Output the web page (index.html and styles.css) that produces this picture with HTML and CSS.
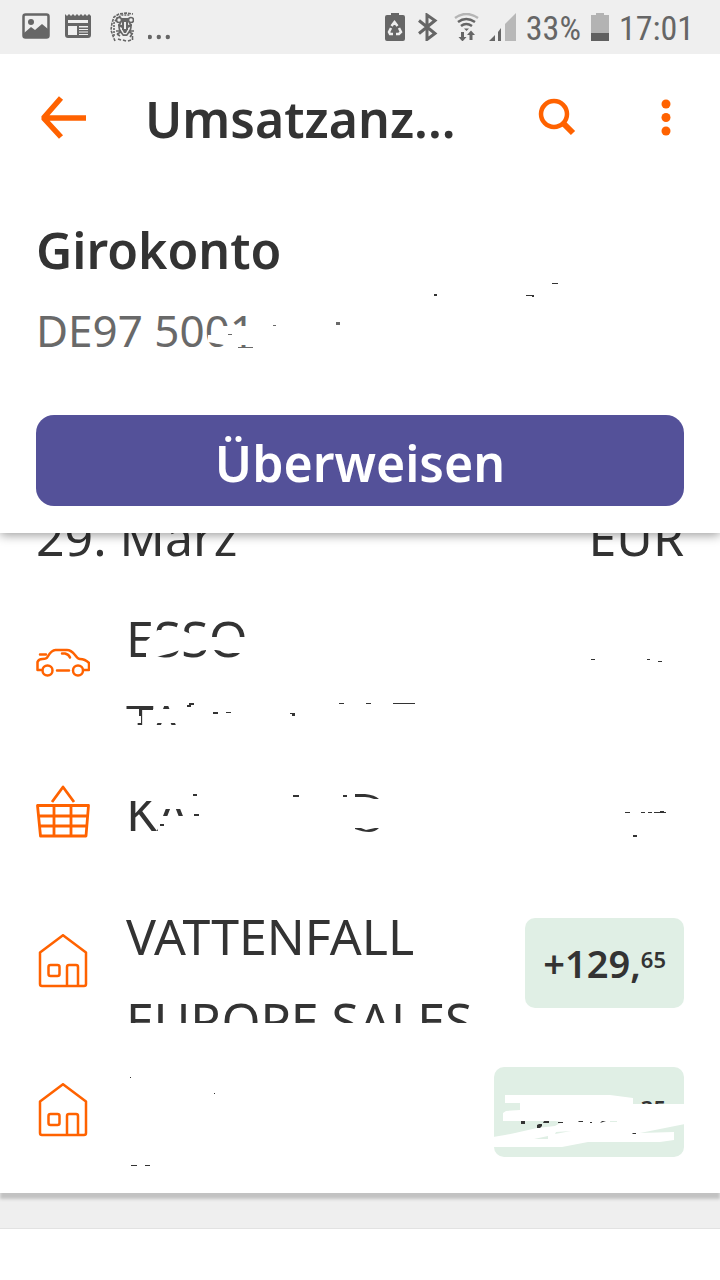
FILE: index.html
```
<!DOCTYPE html>
<html lang="de">

<head>
    <meta charset="UTF-8">
    <meta name="viewport" content="width=device-width, initial-scale=1.0">
    <title>Umsatzanzeige</title>
    <link rel="stylesheet" href="styles.css">
</head>

<body>
    <div class="status-bar">
        <div class="status-left">
            <svg width="28" height="28" viewBox="0 0 28 28">
                <rect x="1.500" y="2.500" width="25" height="23" rx="2" fill="none" stroke="#666" stroke-width="2.500" />
                <circle cx="9" cy="10" r="3" fill="#666" />
                <path d="M2 21 9 15l4 3 7-6 6 5v9H2z" fill="#666" />
            </svg>
            <svg width="28" height="28" viewBox="0 0 28 28">
                <path d="M1 2l2 2 2-2 2 2 2-2 2 2 2-2 2 2 2-2 2 2 2-2 2 2 2-2 2 2V23q0 3-3 3H4q-3 0-3-3z" fill="#666" />
                <path d="M4 8h20v3H4zM4 14h9v9H4zM15 14h9v1.500h-9zM15 17h9v1h-9zM15 19.500h9v1h-9zM15 22h9v1h-9z" fill="#efefef" />
            </svg>
            <svg class="lion" width="24" height="30" viewBox="0 0 24 30">
                <g fill="none" stroke="#666" stroke-width="1.600">
                    <path d="M5 29 3 24 1 18 2 11 4 5 9 2 16 1l7 1" stroke-dasharray="3 1" />
                    <path d="M4 24 4 17 4 11 7 6 12 3 20 3" stroke-dasharray="2 1" />
                    <path d="M8 27l3 1M13 28l3 1M18 29l3-1M22.500 28V24M7 22l3 2M20 25l2-3" />
                    <circle cx="9" cy="8" r="2.500" />
                    <circle cx="21" cy="8" r="2.500" />
                    <path d="M11 10q-4 5 0 10l2 3h4l2-3q4-5 0-10" />
                    <path d="M6 19l5 0M7 22l4-2M24 19h-5M23 22l-4-2" />
                </g>
                <path d="M11 6h8l-1 4h-6zM12 9h2v9h-2zM16 9h2v9h-2zM8 12l4 1v3l-4-2zM22 12l-4 1v3l4-2zM12 17h6l-2 4h-2zM13 23h4v1h-4z" fill="#666" />
            </svg>
            <svg width="22" height="28" viewBox="0 0 22 28">
                <circle cx="1.800" cy="25" r="2.200" fill="#666" />
                <circle cx="10.800" cy="25" r="2.200" fill="#666" />
                <circle cx="19.800" cy="25" r="2.200" fill="#666" />
            </svg>
        </div>
        <div class="status-right">
            <svg width="20" height="28" viewBox="0 0 20 28">
                <path d="M6 0h8v2h4q2 0 2 2v22q0 2-2 2H2q-2 0-2-2V4q0-2 2-2h4z" fill="#666" />
                <path d="M6.500 13 9.500 9l3 4M14 15l2 4-2 2h-3M8 21H5l-1-2 2-4" fill="none" stroke="#efefef" stroke-width="2.500" />
            </svg>
            <svg width="26" height="28" viewBox="0 0 26 28">
                <path d="M4 7.500 20 20.500 12 26.500V2L20 7.500 4 20.500" fill="none" stroke="#666" stroke-width="3" />
            </svg>
            <svg width="28" height="28" viewBox="0 0 28 28">
                <path d="M4 5q11-8 23 0" fill="none" stroke="#b5b5b5" stroke-width="2.500" />
                <path d="M7 9q8-6 17 0M10 13q5-4 11 0" fill="none" stroke="#666" stroke-width="2.500" />
                <path d="M13 15.500h5L15.500 18zM10 19h3v5h2.500L11.500 28.500 7.500 24H10zM18.500 27v-5H16l4-4.500 4 4.500h-2.500v5z" fill="#666" />
            </svg>
            <svg width="27" height="28" viewBox="0 0 27 28">
                <path d="M0 28 6 22v6zM9 19l3-4v13H9z" fill="#666" />
                <path d="M16 11 27 0v28H16z" fill="#b8b8b8" />
            </svg>
            <span class="status-text">33%</span>
            <svg width="18" height="28" viewBox="0 0 18 28">
                <path d="M5 0h8v2h5v18H0V2h5z" fill="#b3b3b3" />
                <path d="M0 20h18v8H0z" fill="#606060" />
            </svg>
            <span class="status-text">17:01</span>
        </div>
    </div>

    <header class="header">
        <div class="app-bar">
            <button class="icon-btn" aria-label="Zurück">
                <svg width="50" height="44" viewBox="0 0 50 44">
                    <path d="M25 3 7.500 23l17.500 19M7 23H50" fill="none" stroke="#ff6200" stroke-width="5.500" stroke-linejoin="bevel" />
                </svg>
            </button>
            <h1 class="app-title">Umsatzanz...</h1>
            <button class="icon-btn" aria-label="Suche">
                <svg width="40" height="44" viewBox="0 0 40 44">
                    <circle cx="17" cy="19" r="13" fill="none" stroke="#ff6200" stroke-width="4.500" />
                    <path d="M26 28 36 38" fill="none" stroke="#ff6200" stroke-width="6" />
                </svg>
            </button>
            <button class="icon-btn menu-btn" aria-label="Menü">
                <svg width="10" height="44" viewBox="0 0 10 44">
                    <circle cx="5" cy="9" r="4.500" fill="#ff6200" />
                    <circle cx="5" cy="22.500" r="4.500" fill="#ff6200" />
                    <circle cx="5" cy="36" r="4.500" fill="#ff6200" />
                </svg>
            </button>
        </div>
        <div class="account">
            <h2 class="account-name">Girokonto</h2>
            <p class="iban">DE97 5001</p>
            <svg class="redaction" viewBox="0 180 720 353" preserveAspectRatio="none">
                <path d="M208 335H222V326H260V345H224L208 342z" fill="#fff" />
                <path d="M228 334h4v1h-4zM238 347h15v1h-15zM273 325h3v1h-3zM336 322h4v3h-4z" fill="#696969" />
                <path d="M434 294h3v2h-3zM526 295h8v2h-2v-1h-6zM552 283h6v1h-6z" fill="#333" />
            </svg>
            <button class="transfer-btn">Überweisen</button>
        </div>
    </header>

    <main class="transactions">
        <div class="month">
            <span>29. März</span>
            <span>EUR</span>
        </div>

        <div class="row">
            <svg class="category" viewBox="0 0 54 54">
                <g fill="none" stroke="#ff6200" stroke-width="2.500" stroke-linecap="round" stroke-linejoin="round">
                    <path d="M5 34H1.500V26q1-3 5-3 4 0 5-2 4-7 8-7H31q4 0 8 5 3 4 5 4 5 0 9 4v7H48" />
                    <path d="M4 18.500H10M26 17.500h3q4 1 5 4M21 34.500H33" />
                    <circle cx="11.500" cy="34.500" r="5" />
                    <circle cx="42" cy="34.500" r="5" />
                </g>
            </svg>
            <div class="name two-lines">ESSO<br>TA</div>
            <svg class="redaction" viewBox="0 588 720 149" preserveAspectRatio="none">
                <path d="M146 641 158 630H182L186 632 194 635H210V637H250V653H232L216 650H206L194 652 180 650 172 653 160 656 146 660z" fill="#fff" />
                <path d="M153 709H182V723H153zM126 709H139V716H141V723H126z" fill="#fff" />
                <path d="M189 703h5v2h-5zM187 705h4v2h-4zM213 712h5v2h-5zM226 712h5v1h-5zM290 713h5v3h-3v-2h-2zM339 703h5v1h-5zM366 703h5v1h-5zM393 703h22v1h-22zM591 659h4v1h-4zM647 659h3v1h-3zM658 661h4v1h-4z" fill="#333" />
            </svg>
        </div>

        <div class="row">
            <svg class="category" viewBox="0 0 54 54">
                <g fill="none" stroke="#ff6200" stroke-width="2.800" stroke-linejoin="round">
                    <path d="M16 17 27 2 38 17M1.500 20.500H52.500L50 51H4.500zM2 31H52M3 41H51M18 20V51M35 20V51" />
                </g>
            </svg>
            <div class="name">KA</div>
            <svg class="redaction" viewBox="0 737 720 149" preserveAspectRatio="none">
                <path d="M126 785H192V809H158L156 801H126zM158 816H192V836H158z" fill="#fff" />
                <path d="M193 794h4v2h-4zM194 814h5v2h-5zM160 824h4v2h-4zM293 795h6v2h-6zM343 795h4v2h-4zM625 812h5v1h-5zM641 812h4v1h-4zM648 812h4v1h-4zM654 812h12v1h-12zM660 811h4v2h-4zM633 835h4v2h-4z" fill="#333" />
                <path d="M355 794h10q10 1 14 5h-5q-5-2-9-2h-10zM355 828h6l5 2 9-2h4q-4 4-10 4-6 0-14-3z" fill="#333" />
            </svg>
        </div>

        <div class="row">
            <svg class="category" viewBox="0 0 54 54">
                <g fill="none" stroke="#ff6200" stroke-width="2.500" stroke-linejoin="round">
                    <path d="M4 18.500 27 1.200 50 18.500V50q0 2-2 2H6q-2 0-2-2z" />
                    <rect x="12.500" y="31" width="11" height="11" rx="2" />
                    <path d="M31 52V33q0-2 2-2h7q2 0 2 2V52" />
                </g>
            </svg>
            <div class="name two-lines">VATTENFALL<br>EUROPE SALES</div>
            <div class="amount">+129,<span class="cents">65</span></div>
        </div>

        <div class="row">
            <svg class="category" viewBox="0 0 54 54">
                <g fill="none" stroke="#ff6200" stroke-width="2.500" stroke-linejoin="round">
                    <path d="M4 18.500 27 1.200 50 18.500V50q0 2-2 2H6q-2 0-2-2z" />
                    <rect x="12.500" y="31" width="11" height="11" rx="2" />
                    <path d="M31 52V33q0-2 2-2h7q2 0 2 2V52" />
                </g>
            </svg>
            <div class="name"></div>
            <div class="amount amount-wide"><span class="cents">35</span></div>
            <svg class="redaction" viewBox="0 1035 720 149" preserveAspectRatio="none">
                <path d="M505 1095H610L633 1098V1104H685V1124L655 1130 640 1133 674 1132V1140L660 1142H588L562 1147H493V1137L505 1135 515 1133 537 1128 555 1126 562 1122 555 1121H503V1113L506 1111 520 1110V1103H505z" fill="#fff" />
                <path d="M534 1139 548 1136V1139zM556 1132 571 1131 555 1134zM610 1121h7v1h-7z" fill="#e0efe5" />
                <path d="M521 1121h4v3h-4zM539 1124h3v2l-2 2h-3v-3zM544 1121h5v2h-6zM558 1122h5v1h-5zM579 1121h4v1h-5zM590 1122h2v1h-2zM602 1121h4l-6 2zM633 1133h3v1h-4zM130 1077h1v1h-1zM214 1093h1v1h-1zM131 1165h6v1h-6zM145 1165h5v1h-5z" fill="#333" />
            </svg>
        </div>
    </main>

    <div class="section-gap"></div>
</body>

</html>
```
FILE: styles.css
```
* {
    box-sizing: border-box;
}

body {
    font-family: "Noto Sans", sans-serif;
    background-color: #ffffff;
    color: #333333;
    margin: 0;
}

h1,
h2,
p {
    margin: 0;
}

svg {
    display: block;
    flex-shrink: 0;
}

button {
    border: none;
    font-family: inherit;
    cursor: pointer;
}

.status-bar {
    position: relative;
    z-index: 2;
    display: flex;
    justify-content: space-between;
    align-items: center;
    height: 54px;
    padding: 0 26px 0 22px;
    background-color: #efefef;
    color: #666666;
}

.status-left {
    display: flex;
    gap: 14px;
}

.status-left .lion {
    margin-left: 4px;
}

.status-right {
    display: flex;
    align-items: center;
    gap: 10px;
}

.status-text {
    font-family: "Roboto Condensed", Roboto, sans-serif;
    font-size: 34px;
    line-height: 40px;
    padding-top: 2px;
}

.header {
    position: relative;
    z-index: 1;
    background-color: #ffffff;
    box-shadow: 0 2px 10px rgba(0, 0, 0, 0.4);
}

.app-bar {
    display: flex;
    align-items: center;
    height: 126px;
    padding: 0 49px 0 36px;
}

.icon-btn {
    padding: 0;
    background: none;
}

.app-title {
    flex: 1;
    padding: 4px 0 0 59px;
    font-size: 50px;
    font-weight: 600;
    line-height: 68px;
}

.menu-btn {
    margin-left: 84px;
}

.account {
    position: relative;
    padding: 36px 36px 27px;
}

.account-name {
    font-size: 50px;
    font-weight: 600;
    line-height: 68px;
}

.iban {
    margin-top: 18px;
    font-size: 44px;
    line-height: 56px;
    color: #696969;
}

.transfer-btn {
    width: 100%;
    margin-top: 57px;
    padding: 15px 12px 9px;
    border-radius: 18px;
    background-color: #545199;
    color: #ffffff;
    font-size: 50px;
    font-weight: 600;
    line-height: 67px;
}

/* strokes painted over private data */
.redaction {
    position: absolute;
    top: 0;
    left: 0;
    width: 100%;
    height: 100%;
    pointer-events: none;
}

.transactions {
    position: relative;
    padding-bottom: 9px;
    box-shadow: 0 6px 3px #c2c2c2;
}

.month {
    display: flex;
    justify-content: space-between;
    align-items: flex-end;
    height: 55px;
    padding: 0 36px 9px;
    overflow: hidden;
    font-size: 50px;
    line-height: 84px;
}

.row {
    position: relative;
    display: flex;
    align-items: center;
    gap: 36px;
    height: 149px;
    padding: 0 36px;
}

.category {
    width: 54px;
    height: 54px;
}

.name {
    flex: 1;
    font-size: 50px;
    line-height: 84px;
    white-space: nowrap;
}

.two-lines {
    height: 129px;
    margin-bottom: 4px;
    overflow: hidden;
}

.amount {
    display: flex;
    align-items: center;
    height: 90px;
    margin-top: 5px;
    padding: 0 18px;
    border-radius: 10px;
    background-color: #e0efe5;
    font-size: 38px;
    font-weight: 600;
}

.amount-wide {
    justify-content: flex-end;
    min-width: 190px;
}

.cents {
    padding-bottom: 8px;
    font-size: 22px;
}

.section-gap {
    height: 36px;
    background-color: #efefef;
    border-bottom: 1px solid #e2e2e2;
}
```
